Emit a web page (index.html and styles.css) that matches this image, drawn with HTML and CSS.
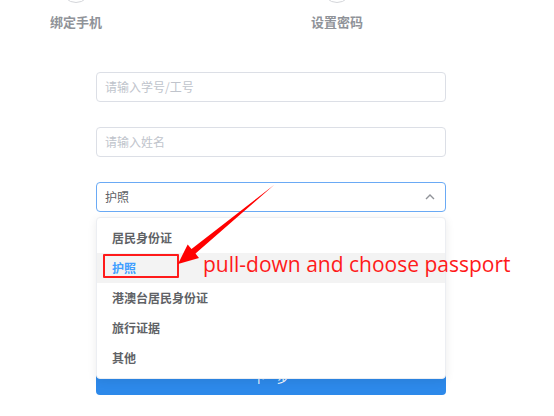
FILE: index.html
```html
<!DOCTYPE html>
<html lang="zh">
<head>
<meta charset="utf-8">
<link rel="stylesheet" href="styles.css">
</head>
<body>
<div class="page">
  <div class="steps">
    <div class="step"><div class="circle"></div><div class="label">绑定手机</div></div>
    <div class="step"><div class="circle"></div><div class="label">设置密码</div></div>
  </div>
  <div class="form">
    <div class="input placeholder">请输入学号/工号</div>
    <div class="input placeholder">请输入姓名</div>
    <div class="select-wrap">
      <div class="input select">
        <span>护照</span>
        <svg class="chev" width="10" height="6" viewBox="0 0 10 6"><path d="M1 5 L5 1 L9 5" fill="none" stroke="#909399" stroke-width="1.4"/></svg>
      </div>
      <div class="dropdown">
        <div class="item">居民身份证</div>
        <div class="item selected">护照<span class="mark"></span><span class="note">pull-down and choose passport</span></div>
        <div class="item">港澳台居民身份证</div>
        <div class="item">旅行证据</div>
        <div class="item">其他</div>
      </div>
    </div>
    <div class="button">下一步</div>
  </div>
  <svg class="arrow" width="554" height="416" viewBox="0 0 554 416">
    <polygon points="274,185 195.5,253.6 199,258 178,264 187.7,244.4 191.5,249" fill="#ff0000"/>
  </svg>
</div>
</body>
</html>
```
FILE: styles.css
```css
html, body {
  margin: 0;
  padding: 0;
  background: #fff;
}
.page {
  position: relative;
  width: 554px;
  height: 416px;
  overflow: hidden;
  font-family: "Noto Sans CJK SC", "Noto Sans", sans-serif;
}
.steps {
  display: flex;
  gap: 181px;
  padding-left: 36px;
}
.step {
  width: 80px;
  display: flex;
  flex-direction: column;
  align-items: center;
}
.circle {
  width: 28px;
  height: 28px;
  margin-top: -27px;
  border: 1px solid #d4d6da;
  border-radius: 50%;
}
.label {
  margin-top: 11px;
  font-size: 13px;
  line-height: 16px;
  font-weight: bold;
  color: #909399;
}
.form {
  margin: 42px 0 0 96px;
  width: 350px;
  display: flex;
  flex-direction: column;
  gap: 25px;
}
.input {
  box-sizing: border-box;
  height: 30px;
  border: 1px solid #dcdfe6;
  border-radius: 4px;
  padding-left: 8px;
  font-size: 12px;
  line-height: 28px;
  color: #606266;
}
.placeholder {
  color: #c0c4cc;
}
.select-wrap {
  position: relative;
}
.select {
  border-color: #6aaaf5;
  display: flex;
  justify-content: space-between;
  align-items: center;
  padding-right: 10px;
}
.chev {
  display: block;
}
.dropdown {
  position: absolute;
  z-index: 2;
  top: 35px;
  left: 0;
  right: 0;
  padding: 5px 0;
  background: #fff;
  border: 1px solid #eceef2;
  border-radius: 4px;
  box-shadow: 0 2px 10px rgba(0, 0, 0, 0.08);
}
.item {
  position: relative;
  height: 30px;
  line-height: 30px;
  padding-left: 15px;
  font-size: 12px;
  font-weight: bold;
  color: #606266;
}
.item.selected {
  background: #f3f3f3;
  color: #409eff;
}
.mark {
  position: absolute;
  left: 6px;
  top: 1px;
  width: 72px;
  height: 20px;
  border: 2px solid #ff1a1a;
  border-radius: 1px;
}
.note {
  position: absolute;
  left: 106px;
  top: -3px;
  font-family: "Open Sans", sans-serif;
  font-weight: normal;
  font-size: 21px;
  line-height: 28px;
  color: #ff1a1a;
  white-space: nowrap;
}
.button {
  margin-top: 124px;
  height: 34px;
  line-height: 34px;
  text-align: center;
  background: #2d89ea;
  border-radius: 4px;
  color: #fff;
  font-size: 12px;
}
.arrow {
  position: absolute;
  left: 0;
  top: 0;
  z-index: 3;
  pointer-events: none;
}
```
